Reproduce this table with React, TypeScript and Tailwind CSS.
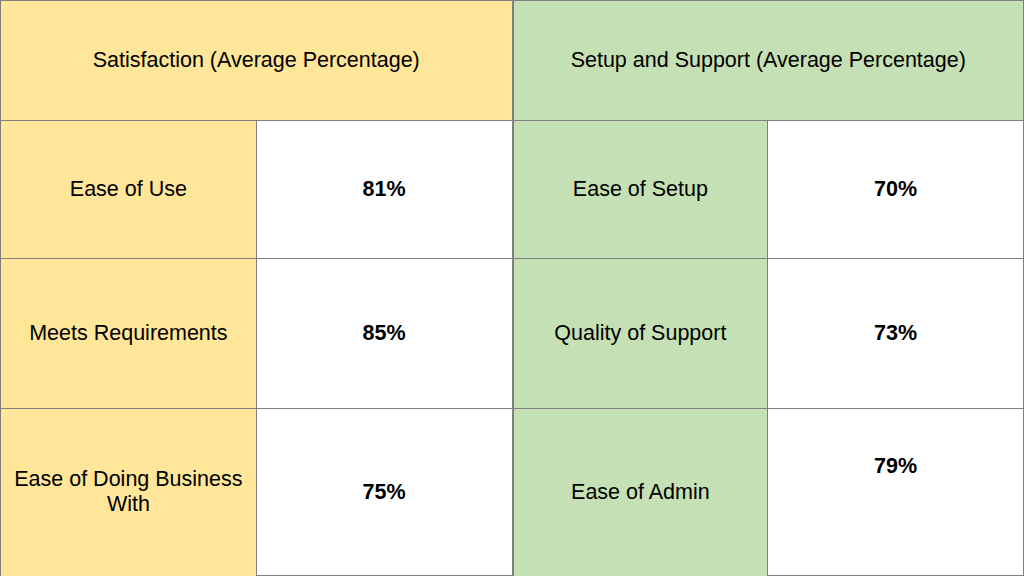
export default function App() {
  const cell = 'flex items-center justify-center text-center border-l border-t border-[#7f7f7f] pb-[1px]';
  const yellow = 'bg-[#ffe699]';
  const green = 'bg-[#c5e0b4]';
  return (
    <div className="w-[1024px] h-[576px] bg-white font-['Liberation_Sans',Arial,sans-serif] text-[21.5px] text-black">
      <div className="grid h-full grid-cols-4 grid-rows-[120px_138px_150px_168px] border-r border-b border-[#7f7f7f]">
        <div className={`${cell} ${yellow} col-span-2`}>Satisfaction (Average Percentage)</div>
        <div className={`${cell} ${green} col-span-2 border-l-2`}>Setup and Support (Average Percentage)</div>

        <div className={`${cell} ${yellow}`}>Ease of Use</div>
        <div className={`${cell} font-bold`}>81%</div>
        <div className={`${cell} ${green} border-l-2`}>Ease of Setup</div>
        <div className={`${cell} font-bold`}>70%</div>

        <div className={`${cell} ${yellow}`}>Meets Requirements</div>
        <div className={`${cell} font-bold`}>85%</div>
        <div className={`${cell} ${green} border-l-2`}>Quality of Support</div>
        <div className={`${cell} font-bold`}>73%</div>

        <div className={`${cell} ${yellow} px-1 leading-[25px]`}>Ease of Doing Business With</div>
        <div className={`${cell} font-bold`}>75%</div>
        <div className={`${cell} ${green} border-l-2`}>Ease of Admin</div>
        <div className={`${cell} font-bold !items-start pt-[41px]`}>79%</div>
      </div>
    </div>
  );
}
